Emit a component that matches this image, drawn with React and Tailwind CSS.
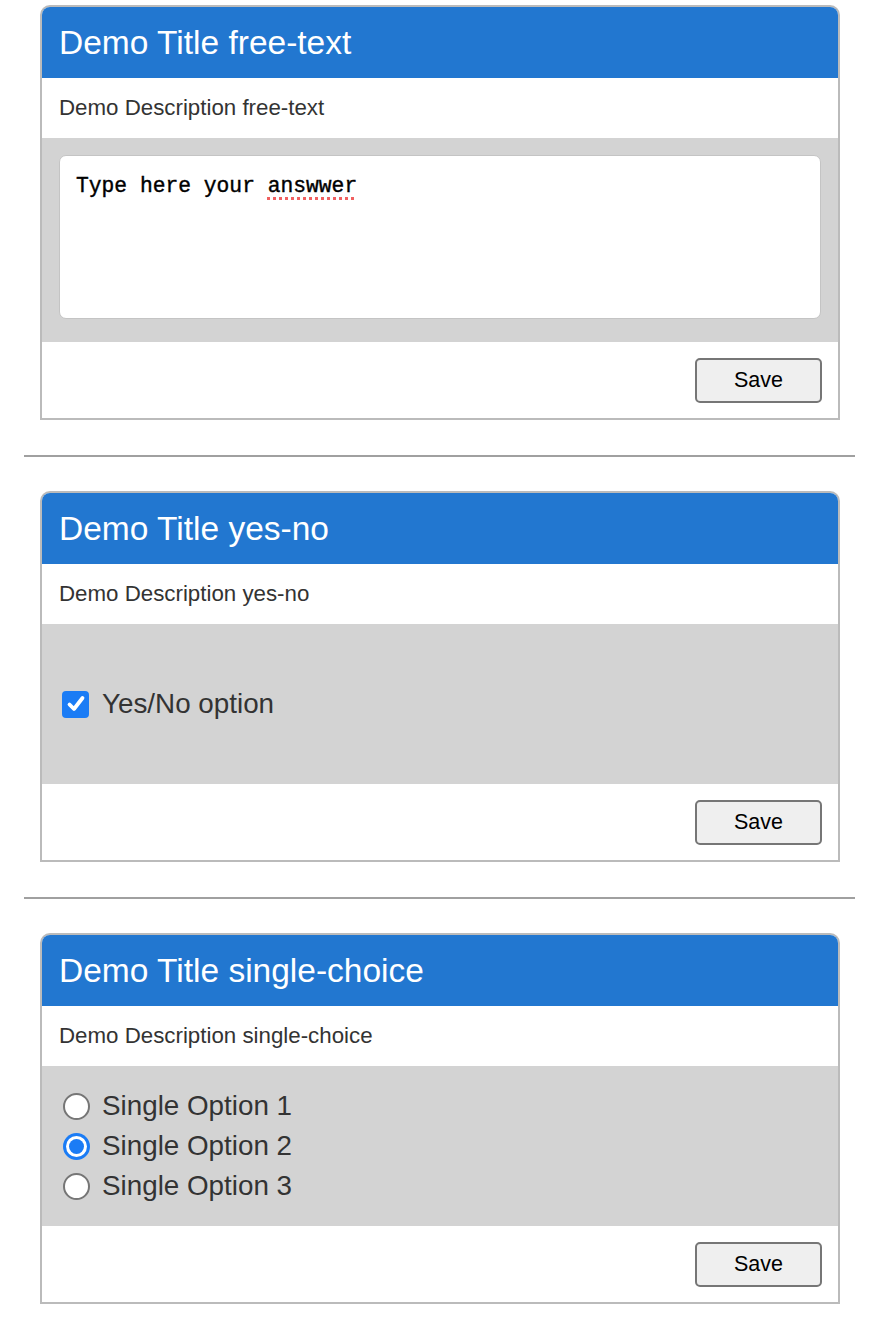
import React from "react";

const sans = { fontFamily: '"Liberation Sans", Arial, Helvetica, sans-serif' };

function Card({ title, desc, bodyClass, children }) {
  return (
    <div className="ml-[40px] w-[800px] border-2 border-[#bbbbbb] rounded-t-[10px] overflow-hidden bg-white">
      <div className="h-[71px] bg-[#2277d0] px-[17px] flex items-center">
        <span className="text-[33.5px] text-white leading-none pt-[1px]">{title}</span>
      </div>
      <div className="h-[60px] px-[17px] flex items-center">
        <span className="text-[22.3px] text-[#333]">{desc}</span>
      </div>
      <div className={"bg-[#d3d3d3] " + bodyClass}>{children}</div>
      <div className="h-[76px] flex items-start justify-end pt-[16px] pr-[16px]">
        <button className="w-[127px] h-[45px] rounded-[5px] border-2 border-[#767676] bg-[#efefef] text-[21.5px] text-black">
          Save
        </button>
      </div>
    </div>
  );
}

function Hr() {
  return <div className="ml-[24px] w-[831px] mt-[35px] mb-[34px] h-[2px] bg-[#a0a0a0]" />;
}

function Radio({ checked, label }) {
  return (
    <div className="h-[40px] flex items-center">
      {checked ? (
        <div className="w-[27px] h-[27px] rounded-full bg-[#1b7cf5] flex items-center justify-center ml-[21px]">
          <div className="w-[21px] h-[21px] rounded-full bg-white flex items-center justify-center">
            <div className="w-[15px] h-[15px] rounded-full bg-[#1b7cf5]" />
          </div>
        </div>
      ) : (
        <div className="w-[27px] h-[27px] rounded-full bg-white border-2 border-[#767676] ml-[21px]" />
      )}
      <span className="ml-[12px] text-[27.8px] text-[#333]">{label}</span>
    </div>
  );
}

export default function App() {
  return (
    <div className="bg-white min-h-[1330px] pt-[5px] pb-[24px]" style={sans}>
      <Card title="Demo Title free-text" desc="Demo Description free-text" bodyClass="px-[17px] pt-[17px] pb-[23px]">
        <div className="h-[164px] bg-white border-[1.5px] border-[#c4c4c4] rounded-[7px] px-[16px] pt-[17px]">
          <span
            className="text-[21.3px] text-black leading-[26px] [-webkit-text-stroke:0.4px_black]"
            style={{ fontFamily: '"Liberation Mono", "Courier New", monospace' }}
          >
            Type here your{" "}
            <span className="underline decoration-dotted decoration-[#f06060] decoration-[3px] underline-offset-[5px]">
              answwer
            </span>
          </span>
        </div>
      </Card>
      <Hr />
      <Card title="Demo Title yes-no" desc="Demo Description yes-no" bodyClass="h-[160px] flex items-center">
        <div className="flex items-center ml-[20px]">
          <div className="w-[27px] h-[27px] rounded-[4px] bg-[#1b7cf5] flex items-center justify-center">
            <svg width="20" height="20" viewBox="0 0 20 20">
              <path d="M3.5 10.5 L8 15 L16.5 4" fill="none" stroke="white" strokeWidth="3.8" strokeLinecap="round" strokeLinejoin="round" />
            </svg>
          </div>
          <span className="ml-[13px] text-[27.8px] text-[#333]">Yes/No option</span>
        </div>
      </Card>
      <Hr />
      <Card title="Demo Title single-choice" desc="Demo Description single-choice" bodyClass="h-[160px] py-[20px]">
        <Radio label="Single Option 1" />
        <Radio checked label="Single Option 2" />
        <Radio label="Single Option 3" />
      </Card>
    </div>
  );
}
